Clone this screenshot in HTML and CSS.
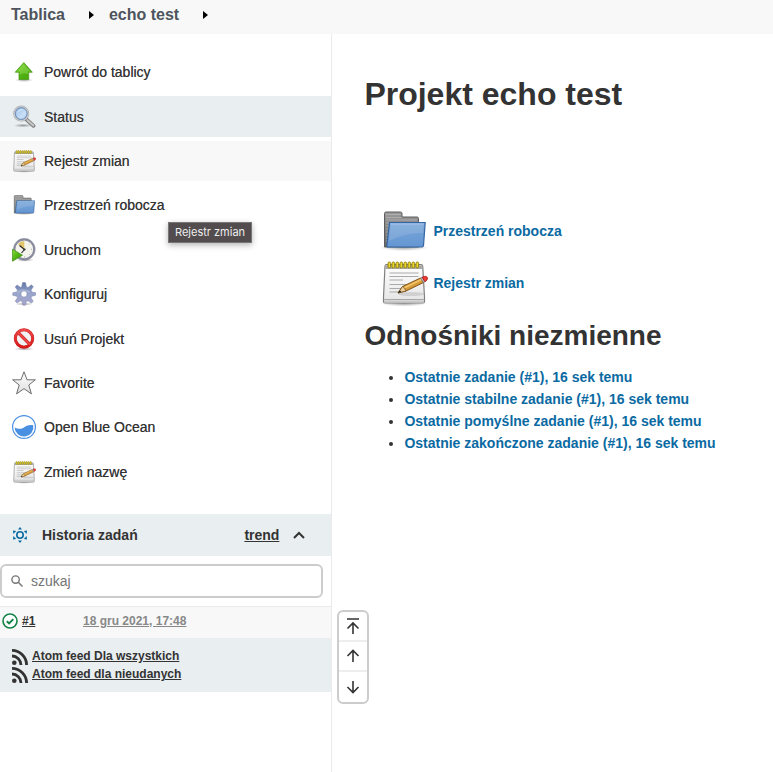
FILE: index.html
```html
<!DOCTYPE html>
<html lang="pl">
<head>
<meta charset="utf-8">
<meta name="viewport" content="width=device-width, initial-scale=1">
<title>echo test [Jenkins]</title>
<link rel="stylesheet" href="styles.css">
</head>
<body>
<svg class="defs" aria-hidden="true">
  <defs>
    <linearGradient id="green" x2="1" y2="1"><stop offset="0" stop-color="#8ae234"/><stop offset=".5" stop-color="#4fb312"/><stop offset="1" stop-color="#4ba40f"/></linearGradient>
    <linearGradient id="lens" x2="1" y2="1"><stop offset="0" stop-color="#8db6e8"/><stop offset=".6" stop-color="#c9dff5"/><stop offset="1" stop-color="#a6c8ee"/></linearGradient>
    <linearGradient id="paper" x2="0" y2="1"><stop offset="0" stop-color="#fff"/><stop offset="1" stop-color="#e4e4e4"/></linearGradient>
    <linearGradient id="blue" x2="0" y2="1"><stop offset="0" stop-color="#7ba7d9"/><stop offset="1" stop-color="#6496d2"/></linearGradient>
    <linearGradient id="grey" x2="0" y2="1"><stop offset="0" stop-color="#9a9a9a"/><stop offset="1" stop-color="#666"/></linearGradient>
    <linearGradient id="gear" x2="0" y2="1"><stop offset="0" stop-color="#6277a8"/><stop offset=".5" stop-color="#99a6cc"/><stop offset="1" stop-color="#a9a5cc"/></linearGradient>
    <linearGradient id="red" x2="0" y2="1"><stop offset="0" stop-color="#f04848"/><stop offset="1" stop-color="#d81818"/></linearGradient>
    <linearGradient id="star" x2="0" y2="1"><stop offset="0" stop-color="#fff"/><stop offset="1" stop-color="#dedede"/></linearGradient>
    <radialGradient id="shade"><stop offset="0" stop-color="#000" stop-opacity=".35"/><stop offset="1" stop-color="#000" stop-opacity="0"/></radialGradient>
  </defs>
  <symbol id="i-up" viewBox="0 0 24 24">
    <ellipse cx="12" cy="20" rx="9" ry="2" fill="url(#shade)"/>
    <path d="M11.800 2.600 20.300 12.200H16.700V19.500H7V12.200H3.200Z" fill="url(#green)" stroke="#4a9a1c" stroke-width=".8" stroke-linejoin="round"/>
    <path d="M11.800 4 18.400 11.400H15.800V14Q11 12 7.800 15V11.400H5Z" fill="#a9e86b" opacity=".4"/>
  </symbol>
  <symbol id="i-search" viewBox="0 0 24 24">
    <ellipse cx="11" cy="20.500" rx="9.500" ry="2" fill="url(#shade)"/>
    <path d="m14.500 14.500 7 6.300" stroke="#777" stroke-width="3.800" stroke-linecap="round"/>
    <path d="m15.500 15.200 5.800 5.300" stroke="#c7c7c7" stroke-width="2.200" stroke-linecap="round"/>
    <circle cx="9.200" cy="8.600" r="7" fill="url(#lens)" stroke="#a9abad" stroke-width="2"/>
    <circle cx="9.200" cy="8.600" r="7" fill="none" stroke="#d6d8da" stroke-width=".8"/>
    <circle cx="9.200" cy="8.600" r="5.800" fill="none" stroke="#5c83b5" stroke-width=".8"/>
    <path d="M5 8.400A4.700 4.700 0 0 1 11.300 4.600Q6.800 5.900 5 8.400Z" fill="#fff" opacity=".55"/>
  </symbol>
  <symbol id="i-note" viewBox="0 0 48 48">
    <ellipse cx="24" cy="44.500" rx="23" ry="3" fill="url(#shade)"/>
    <path d="M6.500 5.500H41Q42.500 5.500 42.700 7L44.500 38V42.500Q44.500 44 43 44H5Q3.500 44 3.500 42.500V38L5 7Q5.200 5.500 6.500 5.500Z" fill="url(#paper)" stroke="#808080" stroke-width="1.200"/>
    <path d="M5.500 6.300H42.300L42.600 10H5.200Z" fill="#a9a9a5"/>
    <path d="M4.200 40.500H43.800" stroke="#a6a6a6" stroke-width="1"/>
    <path d="M4.200 42.500H43.800" stroke="#c9c9c9" stroke-width="2"/>
    <g fill="#ead92f" stroke="#8d7a08" stroke-width=".9"><rect x="8" y="3" width="2.600" height="6" rx="1.300"/><rect x="12" y="3" width="2.600" height="6" rx="1.300"/><rect x="16" y="3" width="2.600" height="6" rx="1.300"/><rect x="20" y="3" width="2.600" height="6" rx="1.300"/><rect x="24" y="3" width="2.600" height="6" rx="1.300"/><rect x="28" y="3" width="2.600" height="6" rx="1.300"/><rect x="32" y="3" width="2.600" height="6" rx="1.300"/><rect x="36" y="3" width="2.600" height="6" rx="1.300"/></g>
    <path d="M9.500 14H38.500M9.500 17.500H38.500M9.500 21H23M9.500 25.500H32M9.500 29.500H27M9.500 33H20" stroke="#aaa" stroke-width="1.100"/>
    <ellipse cx="31" cy="35" rx="13" ry="2" fill="#777" opacity=".22"/>
    <path d="m18 34 4.500-6.500L40.500 19l3 4.500L26 32Z" fill="#d69b38" stroke="#80551b" stroke-width="1"/>
    <path d="M24 29 41.500 20.500" stroke="#f3c66c" stroke-width="1.400"/>
    <path d="m18 34 4.500-6.500Q25 28.500 26 32Z" fill="#edcf9a" stroke="#75501f" stroke-width=".8"/>
    <path d="m18 34 1.800-2.700 1.500 1.700Z" fill="#222"/>
    <path d="m40.500 19 1.500-.8 3 4.600-1.500.7Z" fill="#bbc4cc" stroke="#667" stroke-width=".5"/>
    <path d="M42 18.200Q46 16.400 47.300 18.300 48.400 20.800 45 22.800Z" fill="#ef3b35" stroke="#a51c18" stroke-width=".8"/>
  </symbol>
  <symbol id="i-folder" viewBox="0 0 48 48">
    <ellipse cx="24" cy="40.500" rx="24" ry="3.500" fill="url(#shade)"/>
    <path d="M4.500 40V6.500Q4.500 5 6 5H20.500Q22 5 22 6.500V10H37Q38.500 10 38.500 11.500V40Z" fill="url(#grey)" stroke="#5d5d5d" stroke-width="1"/>
    <path d="M6 7.500H20.500M6 10.500H22M6 13H37M6 16H9M6 19H9M6 22H9M6 25H8M6 28H8M6 31H7M6 34H7" stroke="#b5b5b5" stroke-width=".8"/>
    <path d="M9.500 15.500H45.200L43.500 38.500Q43.300 40 42 40H7.800Q6.800 40 6.900 38.500Z" fill="url(#blue)" stroke="#3465a4" stroke-width="1.200"/>
    <path d="M10.700 16.800H43.800L42.900 26Q27 25 9 34Z" fill="#fff" opacity=".12"/>
    <path d="M10.500 17H43.800" stroke="#a5c4e8" stroke-width="1"/>
  </symbol>
  <symbol id="i-clock" viewBox="0 0 24 24">
    <ellipse cx="13" cy="22" rx="9" ry="1.800" fill="url(#shade)"/>
    <circle cx="12.300" cy="11.300" r="9.800" fill="#f4f3ec" stroke="#8a8ca0" stroke-width="1.900"/>
    <circle cx="12.300" cy="11.300" r="10.900" fill="none" stroke="#6d7082" stroke-width=".5"/>
    <path d="M12.300 11.300 6 6Q8.500 2.900 12.300 3.200Z" fill="#e2c56a"/>
    <path d="m12.500 11.500-5-4M12.500 11.500l-3 3.500" stroke="#222" stroke-width="1.100"/>
    <circle cx="12.500" cy="11.500" r="1.100" fill="#333"/>
    <path d="M19 11.300h1M12.500 18.500v1M17 6.500l.7-.7M17 16l.7.7" stroke="#999" stroke-width=".8"/>
    <path d="M.5 11.200 10.500 17.200.5 23.300Z" fill="url(#green)" stroke="#3c8a17" stroke-width=".7"/>
  </symbol>
  <symbol id="i-gear" viewBox="0 0 24 24">
    <ellipse cx="12" cy="22" rx="9" ry="1.500" fill="url(#shade)"/>
    <path fill-rule="evenodd" d="M10.500.6h3l.9 4.200 1.600.7 3.500-2.700 1.800 2-2.300 3.400.8 1.800 3.900.8v2.400l-3.900 1-.8 1.700 2.300 3.400-2 1.800-3.400-2.300-1.600.7-.8 3.700h-2.600l-.8-3.700-1.700-.7-3.300 2.300-1.900-2 2.300-3.300-.7-1.600-4-.9v-2.500l4-.9.7-1.700L3.200 4.900l1.900-2L8.300 5.300l1.500-.6ZM12 8.900a3.100 3.100 0 1 0 0 6.200 3.100 3.100 0 0 0 0-6.200Z" fill="url(#gear)" stroke="#7884ab" stroke-width=".5"/>
    <path d="M5.500 11Q9 6 18 10" fill="none" stroke="#dbe0f2" stroke-width="2" opacity=".35"/>
  </symbol>
  <symbol id="i-stop" viewBox="0 0 24 24">
    <ellipse cx="12" cy="22" rx="10" ry="1.700" fill="url(#shade)"/>
    <circle cx="12" cy="11.500" r="8.700" fill="#f2f2f2" stroke="#c42020" stroke-width="3"/>
    <circle cx="12" cy="11.500" r="8.700" fill="none" stroke="url(#red)" stroke-width="2.200"/>
    <path d="m6.200 5.700 11.600 11.600" stroke="#c42020" stroke-width="3.200"/>
    <path d="m6 5.500 12 12" stroke="#ed4545" stroke-width="2.200"/>
  </symbol>
  <symbol id="i-star" viewBox="0 0 24 24">
    <path d="m12 .8 3 8h8.400l-6.600 5.200 2.600 8.900-7.400-5.200-7.400 5.200L7.200 14 .6 8.800H9Z" fill="url(#star)" stroke="#6e6e6e" stroke-width="1" stroke-linejoin="round"/>
  </symbol>
  <symbol id="i-ocean" viewBox="0 0 24 24">
    <circle cx="12" cy="12" r="11.400" fill="#fff" stroke="#4a90e2" stroke-width="1.200"/>
    <path d="M2.600 12.500C6.500 14.500 9.500 14 12.300 12.200 15 10.500 17.800 9.500 21.200 10.300A9.400 9.400 0 1 1 2.600 12.500Z" fill="#4a90e2"/>
  </symbol>
  <symbol id="i-rss" viewBox="0 0 16 16">
    <circle cx="2.300" cy="13.700" r="2.300" fill="#333"/>
    <path d="M0 7A9 9 0 0 1 9 16M0 1.400A14.600 14.600 0 0 1 14.600 16" fill="none" stroke="#333" stroke-width="2.800"/>
  </symbol>
</svg>

<nav class="crumbs" aria-label="Breadcrumb">
  <a href="#">Tablica</a>
  <svg class="crumb-arrow" viewBox="0 0 5 8"><path d="M0 0 5 4 0 8Z"/></svg>
  <a href="#">echo test</a>
  <svg class="crumb-arrow" viewBox="0 0 5 8"><path d="M0 0 5 4 0 8Z"/></svg>
</nav>

<div class="page">
  <aside class="side">
    <nav class="tasks">
      <a href="#"><svg><use href="#i-up"/></svg>Powrót do tablicy</a>
      <a href="#" class="active"><svg><use href="#i-search"/></svg>Status</a>
      <a href="#" class="hover"><svg><use href="#i-note"/></svg>Rejestr zmian<span class="tip" role="tooltip">Rejestr zmian</span></a>
      <a href="#"><svg><use href="#i-folder"/></svg>Przestrzeń robocza</a>
      <a href="#"><svg><use href="#i-clock"/></svg>Uruchom</a>
      <a href="#"><svg><use href="#i-gear"/></svg>Konfiguruj</a>
      <a href="#"><svg><use href="#i-stop"/></svg>Usuń Projekt</a>
      <a href="#"><svg><use href="#i-star"/></svg>Favorite</a>
      <a href="#"><svg><use href="#i-ocean"/></svg>Open Blue Ocean</a>
      <a href="#"><svg><use href="#i-note"/></svg>Zmień nazwę</a>
    </nav>

    <section class="history">
      <header class="history-head">
        <svg class="sun" viewBox="0 0 16 16"><circle cx="8" cy="8" r="3.200" fill="none" stroke="#0b6aa2" stroke-width="1.600"/><path d="M8 0 10 2.600H6ZM8 16 6 13.400h4ZM1 3.400 4.200 4 1.400 7ZM15 3.400 11.800 4l2.800 3ZM1 12.600 4.200 12 1.400 9ZM15 12.600l-3.200-.6 2.800-3Z" fill="#0b6aa2"/></svg>
        <span class="history-title">Historia zadań</span>
        <a href="#">trend</a>
        <button type="button" class="collapse" aria-label="Zwiń"><svg viewBox="0 0 12 8"><path d="m1 7 5-5 5 5" fill="none" stroke="#333" stroke-width="2"/></svg></button>
      </header>
      <label class="search">
        <svg viewBox="0 0 12 12"><circle cx="4.600" cy="4.600" r="3.700"/><path d="m7.300 7.300 4.200 4.200"/></svg>
        <input type="text" placeholder="szukaj" aria-label="szukaj">
      </label>
      <div class="build">
        <svg viewBox="0 0 16 16"><circle cx="8" cy="8" r="7" fill="#fff" stroke="#138347" stroke-width="1.600"/><path d="m4.800 8.200 2.300 2.200 4.200-4.300" fill="none" stroke="#138347" stroke-width="2"/></svg>
        <a href="#" class="number">#1</a>
        <a href="#" class="date">18 gru 2021, 17:48</a>
      </div>
      <div class="feeds">
        <a href="#"><svg><use href="#i-rss"/></svg><span>Atom feed Dla wszystkich</span></a>
        <a href="#"><svg><use href="#i-rss"/></svg><span>Atom feed dla nieudanych</span></a>
      </div>
    </section>

    <div class="pager">
      <button type="button" aria-label="Najnowsze"><svg viewBox="0 0 14 16"><path d="M1 1h12M7 16V5M1.500 10.500 7 5l5.500 5.500"/></svg></button>
      <button type="button" aria-label="Nowsze"><svg viewBox="0 0 14 16"><path d="M7 14V3M1.500 8 7 2.500 12.500 8"/></svg></button>
      <button type="button" aria-label="Starsze"><svg viewBox="0 0 14 16"><path d="M7 2v11M1.500 8 7 13.500 12.500 8"/></svg></button>
    </div>
  </aside>

  <main class="main">
    <h1>Projekt echo test</h1>
    <div class="shortcuts">
      <a href="#"><svg><use href="#i-folder"/></svg>Przestrzeń robocza</a>
      <a href="#"><svg><use href="#i-note"/></svg>Rejestr zmian</a>
    </div>
    <h2>Odnośniki niezmienne</h2>
    <ul class="permalinks">
      <li><a href="#">Ostatnie zadanie (#1), 16 sek temu</a></li>
      <li><a href="#">Ostatnie stabilne zadanie (#1), 16 sek temu</a></li>
      <li><a href="#">Ostatnie pomyślne zadanie (#1), 16 sek temu</a></li>
      <li><a href="#">Ostatnie zakończone zadanie (#1), 16 sek temu</a></li>
    </ul>
  </main>
</div>
</body>
</html>
```
FILE: styles.css
```css
* {
  box-sizing: border-box;
}

body {
  margin: 0;
  min-height: 100vh;
  display: flex;
  flex-direction: column;
  background: #fff;
  color: #333;
  font-family: "Liberation Sans", Arial, sans-serif;
  font-size: 14px;
}

a {
  color: inherit;
}

button {
  padding: 0;
  border: 0;
  background: none;
}

svg {
  display: block;
  flex: none;
}

.defs {
  position: absolute;
  width: 0;
  height: 0;
}

/* Breadcrumbs */
.crumbs {
  display: flex;
  align-items: center;
  height: 34px;
  padding: 0 11px 5px;
  background: #f8f8f8;
  color: #4d545d;
  font-size: 16px;
  font-weight: bold;
}

.crumbs a {
  text-decoration: none;
}

.crumb-arrow {
  width: 5px;
  height: 8px;
  margin: 0 15px 0 24px;
}

/* Columns */
.page {
  flex: 1;
  display: grid;
  grid-template-columns: 43% 1fr;
}

.side {
  position: relative;
  padding-top: 18px;
  border-right: 1px solid #eaeaea;
}

/* Task list */
.tasks {
  display: grid;
  grid-auto-rows: 1fr;
  gap: 4px;
  height: 440px;
  margin-bottom: 22px;
}

.tasks a {
  position: relative;
  display: flex;
  align-items: center;
  gap: 8px;
  padding: 0 12px;
  text-decoration: none;
  text-shadow: 0 0 0 #777;
}

.tasks svg {
  width: 24px;
  height: 24px;
}

.tasks .active {
  background: #e9eef1;
}

.tasks .hover {
  background: #f8f8f8;
}

.tip {
  position: absolute;
  z-index: 1;
  top: 81px;
  left: 168px;
  padding: 0 6px;
  border: 1px solid #777;
  background: #524c4e;
  box-shadow: 0 2px 6px rgba(0, 0, 0, 0.3);
  color: #eee;
  font-family: Inter, sans-serif;
  font-size: 11px;
  line-height: 19px;
  text-shadow: none;
  white-space: nowrap;
}

/* Build history */
.history-head {
  display: flex;
  align-items: center;
  height: 42px;
  padding: 0 26px 0 12px;
  background: #e9eef1;
  font-weight: bold;
}

.sun {
  width: 16px;
  height: 16px;
}

.history-title {
  flex: 1;
  margin-left: 14px;
}

.collapse {
  margin-left: 14px;
}

.collapse svg {
  width: 12px;
  height: 8px;
}

.search {
  display: flex;
  align-items: center;
  gap: 8px;
  height: 34px;
  margin: 8px 8px 8px 0;
  padding: 0 9px;
  border: 2px solid #ccc;
  border-radius: 6px;
}

.search svg {
  width: 12px;
  height: 12px;
  fill: none;
  stroke: #757575;
  stroke-width: 1.4;
}

.search input {
  flex: 1;
  min-width: 0;
  padding: 0;
  border: 0;
  outline: 0;
  background: none;
  font: inherit;
}

.search input::placeholder {
  color: #757575;
}

.build {
  display: flex;
  align-items: center;
  height: 32px;
  padding: 0 2px 4px;
  border-top: 1px solid #eaeaea;
  background: #f8f8f8;
  font-size: 12px;
  font-weight: bold;
}

.build svg {
  width: 16px;
  height: 16px;
  margin-right: 4px;
}

.number {
  width: 61px;
}

.date {
  color: #888;
}

.feeds {
  padding: 9px 12px;
  background: #e9eef1;
  font-size: 12px;
  font-weight: bold;
  line-height: 18px;
}

.feeds a {
  display: flex;
  align-items: flex-end;
  gap: 4px;
}

.feeds svg {
  width: 16px;
  height: 16px;
}

/* Build pager, floating over the column border */
.pager {
  position: absolute;
  top: 576px;
  left: 100%;
  display: grid;
  grid-template-rows: 28px 30px 32px;
  width: 32px;
  margin-left: 6px;
  border: 2px solid #ccc;
  border-radius: 6px;
  background: #fff;
}

.pager button {
  display: grid;
  place-items: center;
}

.pager button + button {
  border-top: 2px solid #eee;
}

.pager svg {
  width: 14px;
  height: 16px;
  fill: none;
  stroke: #333;
  stroke-width: 1.6;
}

/* Project */
.main {
  padding: 40px 32px;
}

h1,
h2 {
  margin: 0;
  line-height: 40px;
}

h1 {
  font-size: 32px;
}

h2 {
  font-size: 28px;
}

.main a {
  color: #0b6aa2;
  font-weight: bold;
  text-decoration: none;
}

.shortcuts {
  display: grid;
  gap: 4px;
  margin: 93px 0 9px 16px;
}

.shortcuts a {
  display: flex;
  align-items: center;
  gap: 5px;
}

.shortcuts svg {
  width: 48px;
  height: 48px;
}

.permalinks {
  margin: 10px 0 0;
  padding-left: 40px;
  line-height: 22px;
}
```
